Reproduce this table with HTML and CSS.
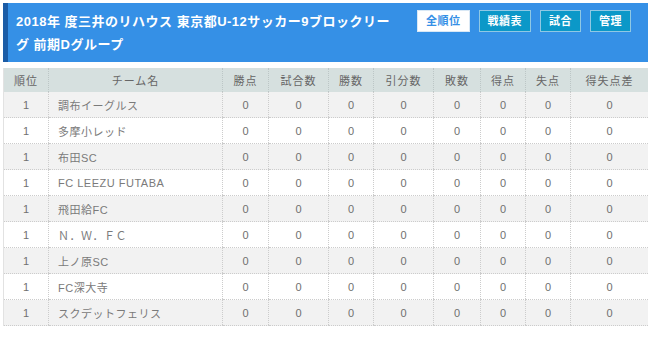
FILE: index.html
```html
<!DOCTYPE html>
<html lang="ja">
<head>
<meta charset="utf-8">
<link rel="stylesheet" href="styles.css">
</head>
<body>
<div class="page">
  <div class="head">
    <h1 class="title">2018年 度三井のリハウス 東京都U-12サッカー9ブロックリーグ 前期Dグループ</h1>
    <div class="btns">
      <a class="btn btn-on">全順位</a>
      <a class="btn">戦績表</a>
      <a class="btn">試合</a>
      <a class="btn">管理</a>
    </div>
  </div>
  <table class="standings">
    <colgroup>
      <col class="c45"><col class="c174"><col class="c46"><col class="c60"><col class="c45"><col class="c60"><col class="c47"><col class="c45"><col class="c45"><col>
    </colgroup>
    <thead>
      <tr><th>順位</th><th>チーム名</th><th>勝点</th><th>試合数</th><th>勝数</th><th>引分数</th><th>敗数</th><th>得点</th><th>失点</th><th>得失点差</th></tr>
    </thead>
    <tbody>
      <tr><td>1</td><td class="name">調布イーグルス</td><td>0</td><td>0</td><td>0</td><td>0</td><td>0</td><td>0</td><td>0</td><td>0</td></tr>
      <tr><td>1</td><td class="name">多摩小レッド</td><td>0</td><td>0</td><td>0</td><td>0</td><td>0</td><td>0</td><td>0</td><td>0</td></tr>
      <tr><td>1</td><td class="name">布田SC</td><td>0</td><td>0</td><td>0</td><td>0</td><td>0</td><td>0</td><td>0</td><td>0</td></tr>
      <tr><td>1</td><td class="name">FC LEEZU FUTABA</td><td>0</td><td>0</td><td>0</td><td>0</td><td>0</td><td>0</td><td>0</td><td>0</td></tr>
      <tr><td>1</td><td class="name">飛田給FC</td><td>0</td><td>0</td><td>0</td><td>0</td><td>0</td><td>0</td><td>0</td><td>0</td></tr>
      <tr><td>1</td><td class="name">Ｎ．Ｗ．ＦＣ</td><td>0</td><td>0</td><td>0</td><td>0</td><td>0</td><td>0</td><td>0</td><td>0</td></tr>
      <tr><td>1</td><td class="name">上ノ原SC</td><td>0</td><td>0</td><td>0</td><td>0</td><td>0</td><td>0</td><td>0</td><td>0</td></tr>
      <tr><td>1</td><td class="name">FC深大寺</td><td>0</td><td>0</td><td>0</td><td>0</td><td>0</td><td>0</td><td>0</td><td>0</td></tr>
      <tr><td>1</td><td class="name">スクデットフェリス</td><td>0</td><td>0</td><td>0</td><td>0</td><td>0</td><td>0</td><td>0</td><td>0</td></tr>
    </tbody>
  </table>
</div>
</body>
</html>
```

FILE: styles.css
```css
html, body {
  margin: 0;
  padding: 0;
  background: #ffffff;
}
body {
  font-family: "Liberation Sans", "Noto Sans CJK JP", sans-serif;
  color: #666666;
}
.page {
  padding: 3px 2px 0 3px;
}
.head {
  display: flex;
  align-items: flex-start;
  background: #3590e6;
  border-left: 5px solid #1b5ca6;
  padding: 7px 17px 6px 8px;
}
.title {
  flex: 1;
  margin: 0;
  font-size: 13px;
  font-weight: bold;
  line-height: 23px;
  letter-spacing: 0.5px;
  color: #ffffff;
}
.btns {
  display: flex;
  gap: 9px;
  margin-left: 22px;
}
.btn {
  display: block;
  height: 20px;
  line-height: 20px;
  padding: 0 8px;
  font-size: 11px;
  font-weight: bold;
  letter-spacing: 0.5px;
  color: #ffffff;
  background: #0b98c8;
  border: 1px solid #8fc8e4;
}
.btn-on {
  background: #ffffff;
  color: #3590e6;
  padding: 0 8px;
  border-color: #d9e8f5;
}
.standings {
  margin-top: 6px;
  width: 645px;
  border-collapse: collapse;
  table-layout: fixed;
  font-size: 11px;
  border-left: 1px solid #e2e2e2;
}
.c45 { width: 45px; }
.c46 { width: 46px; }
.c47 { width: 47px; }
.c60 { width: 60px; }
.c174 { width: 174px; }
.standings th {
  height: 24px;
  padding: 0;
  background: #d6e0df;
  color: #666666;
  font-weight: normal;
  letter-spacing: 1px;
  text-align: center;
  border-left: 1px dotted #bcc6c6;
}
.standings td {
  height: 25px;
  padding: 0;
  text-align: center;
  border-left: 1px dotted #cccccc;
  border-bottom: 1px dotted #cccccc;
  color: #707070;
}
.standings th:first-child,
.standings td:first-child {
  border-left: none;
}
.standings tbody tr:nth-child(odd) td {
  background: #f2f2f2;
}
.standings tbody tr:nth-child(even) td {
  background: #ffffff;
}
.standings td.name {
  text-align: left;
  padding-left: 9px;
  color: #7a7a7a;
  letter-spacing: 0.5px;
}
```
